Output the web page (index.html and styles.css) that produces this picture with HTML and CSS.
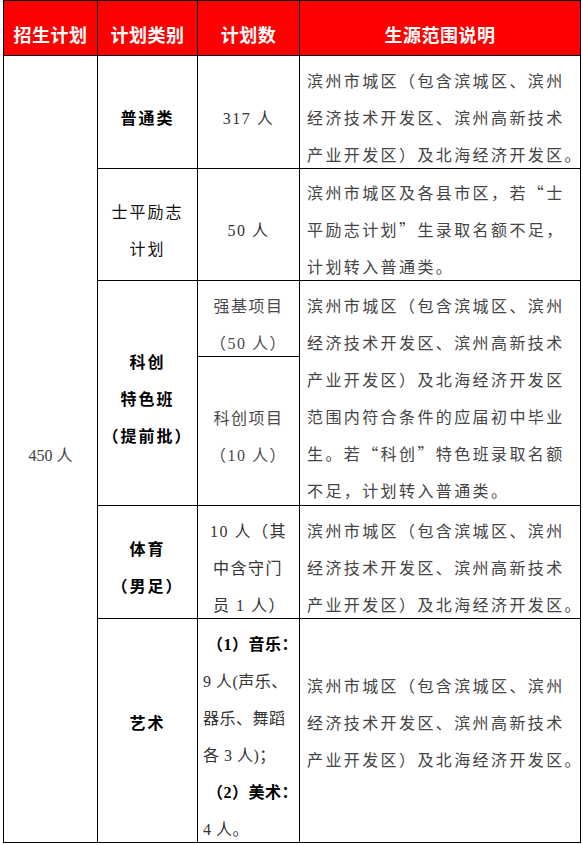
FILE: index.html
```html
<!DOCTYPE html>
<html lang="zh-CN">
<head>
<meta charset="utf-8">
<title>招生计划</title>
<link rel="stylesheet" href="styles.css">
</head>
<body>
<table class="plan">
  <colgroup>
    <col class="c1"><col class="c2"><col class="c3"><col class="c4">
  </colgroup>
  <thead>
    <tr class="rh">
      <th><div class="t">招生计划</div></th>
      <th><div class="t">计划类别</div></th>
      <th><div class="t">计划数</div></th>
      <th><div class="t">生源范围说明</div></th>
    </tr>
  </thead>
  <tbody>
    <tr class="r1">
      <td rowspan="6" class="total"><div class="t">450 人</div></td>
      <td class="cat b"><div class="t">普通类</div></td>
      <td class="num"><div class="t">317 人</div></td>
      <td class="desc"><div class="t">滨州市城区（包含滨城区、滨州<br>经济技术开发区、滨州高新技术<br>产业开发区）及北海经济开发区<span class="end">。</span></div></td>
    </tr>
    <tr class="r2">
      <td class="cat"><div class="t">士平励志<br>计划</div></td>
      <td class="num"><div class="t">50 人</div></td>
      <td class="desc"><div class="t">滨州市城区及各县市区，若<span class="q">“</span>士<br>平励志计划<span class="q">”</span>生录取名额不足，<br>计划转入普通类。</div></td>
    </tr>
    <tr class="r3a">
      <td rowspan="2" class="cat b"><div class="t">科创<br>特色班<br>（提前批）</div></td>
      <td class="num sub"><div class="t">强基项目<br>（50 人）</div></td>
      <td rowspan="2" class="desc"><div class="t">滨州市城区（包含滨城区、滨州<br>经济技术开发区、滨州高新技术<br>产业开发区）及北海经济开发区<br>范围内符合条件的应届初中毕业<br>生。若<span class="q">“</span>科创<span class="q">”</span>特色班录取名额<br>不足，计划转入普通类。</div></td>
    </tr>
    <tr class="r3b">
      <td class="num sub"><div class="t">科创项目<br>（10 人）</div></td>
    </tr>
    <tr class="r4">
      <td class="cat b"><div class="t">体育<br>（男足）</div></td>
      <td class="num left"><div class="t">10 人（其<br><span class="ind">中含守门</span><br><span class="ind">员 1 人）</span></div></td>
      <td class="desc"><div class="t">滨州市城区（包含滨城区、滨州<br>经济技术开发区、滨州高新技术<br>产业开发区）及北海经济开发区<span class="end">。</span></div></td>
    </tr>
    <tr class="r5">
      <td class="cat b lift"><div class="t">艺术</div></td>
      <td class="num art"><div class="t"><span class="hd">（1）音乐：</span><br>9 人(声乐、<br>器乐、舞蹈<br>各 3 人)；<br><span class="hd">（2）美术：</span><br>4 人。</div></td>
      <td class="desc lift"><div class="t">滨州市城区（包含滨城区、滨州<br>经济技术开发区、滨州高新技术<br>产业开发区）及北海经济开发区<span class="end">。</span></div></td>
    </tr>
  </tbody>
</table>
</body>
</html>
```

FILE: styles.css
```css
html, body {
  margin: 0;
  padding: 0;
  background: #ffffff;
}

.plan {
  margin-left: 3px;
  width: 577px;
  table-layout: fixed;
  border-collapse: collapse;
  font-family: "Liberation Serif", "Noto Sans CJK SC", serif;
  font-size: 16px;
  color: #3a3a3a;
}

.c1 { width: 94px; }
.c2 { width: 100px; }
.c3 { width: 102px; }
.c4 { width: 281px; }

.plan th,
.plan td {
  border: 1px solid #000;
  padding: 0;
  vertical-align: middle;
  text-align: center;
  line-height: 37px;
  white-space: nowrap;
  overflow: visible;
}

.t {
  padding-top: 6px;
  margin-bottom: -6px;
}

.q {
  font-family: "Noto Sans CJK SC", sans-serif;
  line-height: 0;
}

.end {
  letter-spacing: 0;
}

.plan th {
  background: #ff0000;
  color: #ffffff;
  font-family: "Noto Sans CJK SC", "Liberation Sans", sans-serif;
  font-weight: 700;
  font-size: 18px;
  letter-spacing: 0.5px;
}

.rh { height: 55px; }
.r1 { height: 113px; }
.r2 { height: 112px; }
.r3a { height: 76px; }
.r3b { height: 149px; }
.r4 { height: 113px; }
.r5 { height: 224px; }

.plan td.total {
  color: #404040;
}

.plan td.cat {
  color: #111;
  letter-spacing: 2px;
}

.plan td.cat.b {
  font-weight: 700;
  color: #000;
}

.plan td.num {
  letter-spacing: 1.5px;
  color: #333;
}

.plan td.sub {
  color: #4a4a4a;
}

.plan td.left {
  text-align: left;
  padding-left: 12px;
}

.ind {
  padding-left: 3px;
}

.plan td.art {
  text-align: left;
  padding-left: 5px;
  letter-spacing: 0.5px;
}

.hd {
  font-weight: 700;
  color: #000;
  padding-left: 4px;
}

.plan td.desc {
  text-align: left;
  padding-left: 7px;
  letter-spacing: 2.4px;
  color: #444;
}

.plan td.lift {
  padding-bottom: 26px;
}
```
